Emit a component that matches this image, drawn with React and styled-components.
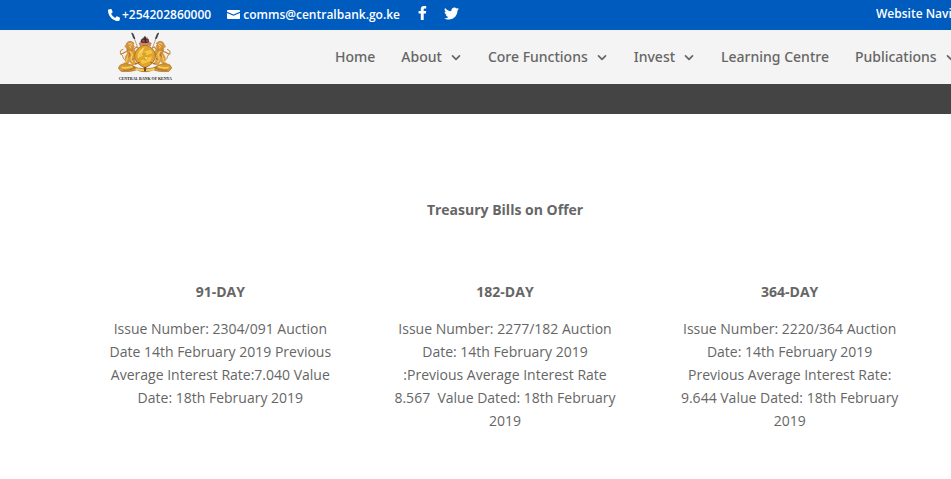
import styled, { createGlobalStyle } from "styled-components";
import { FaPhoneAlt, FaTwitter } from "react-icons/fa";

const GlobalStyle = createGlobalStyle`
  body {
    margin: 0;
    background: #fff;
    color: #666;
    font-family: "Open Sans", "Noto Sans", sans-serif;
    font-size: 14px;
    line-height: 23px;
    overflow-x: hidden;
  }

  a {
    color: inherit;
    text-decoration: none;
  }
`;

const TopBar = styled.div`
  display: flex;
  align-items: center;
  box-sizing: border-box;
  height: 30px;
  padding: 0 0 2px 108px;
  background: #005bbf;
  color: #fff;
  font-size: 12px;
  font-weight: 600;
  white-space: nowrap;
`;

const Contact = styled.a`
  display: flex;
  align-items: center;
  gap: ${(props) => props.$gap}px;
  margin-right: 16px;

  svg {
    margin-top: ${(props) => props.$drop}px;
  }
`;

const Socials = styled.div`
  display: flex;
  align-items: center;
  gap: 17px;
  padding: 0 0 2px 2px;
`;

const Social = styled.a`
  display: flex;
`;

const SiteLink = styled.a`
  width: 75px;
  margin-left: auto;
  padding-bottom: 2px;
  overflow: hidden;
`;

const Header = styled.header`
  display: flex;
  align-items: center;
  height: 54px;
  padding-left: 118px;
  background: #f4f4f4;
  overflow: hidden;
`;

const LogoLink = styled.a`
  display: flex;
  flex-shrink: 0;
`;

const Nav = styled.nav`
  display: flex;
  gap: 26px;
  margin-left: 161px;
  padding-bottom: 2px;
  font-family: "Noto Sans", "Open Sans", sans-serif;
  font-weight: 500;
  white-space: nowrap;
`;

const NavLink = styled.a`
  display: flex;
  align-items: center;
  gap: 8px;

  svg {
    margin-top: 2px;
  }
`;

const Strip = styled.div`
  height: 30px;
  background: #444;
`;

const Main = styled.main`
  padding: 84px 49px 36px 108px;
  text-align: center;
`;

const Title = styled.h1`
  margin: 0 0 59px;
  font-size: 14px;
  font-weight: 700;
`;

const Bills = styled.div`
  display: grid;
  grid-template-columns: repeat(3, 1fr);
  gap: 60px;
`;

const BillName = styled.h2`
  margin: 0 0 14px;
  font-size: 14px;
  font-weight: 700;
`;

const BillText = styled.p`
  margin: 0;
`;

const menu = [
  { label: "Home" },
  { label: "About", sub: true },
  { label: "Core Functions", sub: true },
  { label: "Invest", sub: true },
  { label: "Learning Centre" },
  { label: "Publications", sub: true },
];

const bills = [
  {
    name: "91-DAY",
    text: "Issue Number: 2304/091 Auction Date 14th February 2019 Previous Average Interest Rate:7.040 Value Date: 18th February 2019",
  },
  {
    name: "182-DAY",
    text: "Issue Number: 2277/182 Auction Date: 14th February 2019 :Previous Average Interest Rate 8.567\u00a0 Value Dated: 18th February 2019",
  },
  {
    name: "364-DAY",
    text: "Issue Number: 2220/364 Auction Date: 14th February 2019 Previous Average Interest Rate: 9.644 Value Dated: 18th February 2019",
  },
];

const Chevron = () => (
  <svg width="12" height="12" viewBox="0 0 12 12" fill="none" aria-hidden="true">
    <path d="M2.5 4.8 6 8.3l3.5-3.5" stroke="#666" strokeWidth="1.7" strokeLinecap="round" strokeLinejoin="round" />
  </svg>
);

const Envelope = () => (
  <svg width="13" height="11" viewBox="0 0 13 11" fill="#fff" aria-hidden="true">
    <path d="M.8 1h11.400q.8 0 .8.8v.9L6.500 5.500 0 2.700v-.9q0-.8.8-.8z" />
    <path d="M0 3.900 6.500 6.700 13 3.900V9.200q0 .8-.8.8H.8q-.8 0-.8-.8z" />
  </svg>
);

const Facebook = () => (
  <svg width="9" height="14" viewBox="0 0 9 14" fill="#fff" aria-hidden="true">
    <path d="M8.200 0v2.500H6.700q-1 0-1 1V5h2.500l-.3 2.600H5.700V14H2.800V7.600H.6V5h2.200V3.300Q2.800 0 6 0z" />
  </svg>
);

const Lion = () => (
  <g strokeLinecap="round" strokeLinejoin="round">
    {/* tail */}
    <path d="M78 182c-10-4-8-11-11-16-5-3-8-7-5-14l7-4M68 160l-7 2" fill="none" stroke="#bd8238" strokeWidth="3" />
    {/* body and hind leg */}
    <path d="M80 145c8-4 17-3 24 4l4 12-6 9 3 15 7 7-15 3-8-11-9 12-12 1 9-13-2-12 7-12z" fill="#dda03c" stroke="#a8692a" />
    {/* mane and head */}
    <path d="M79 131c3-7 11-9 17-6l6 4-2 5 3 6-6 8 1 6-10-4-7 3 2-8-8-4z" fill="#d39337" stroke="#98591f" />
    <path d="M85 132l8-2 3 4-7 5 4 5" fill="none" stroke="#f6cf7d" strokeWidth="3" />
    {/* front legs */}
    <path d="M98 151l11-10 4 2M82 154l-9 3-5 4M101 160l9 2" fill="none" stroke="#cf8b33" strokeWidth="4" />
    <path d="M91 154l6 10-4 12 5 10M84 169l-4 12-8 10" fill="none" stroke="#f7c65a" strokeWidth="4" />
    <path d="M87 158l3 7-5 7M102 176l-5 2" fill="none" stroke="#8d5222" strokeWidth="2" />
  </g>
);

const CoatOfArms = () => (
  <svg width="56" height="50" viewBox="54 96 168 150" role="img" aria-label="Central Bank of Kenya">
    {/* spears */}
    <path d="M101 110l20 54M170 110l-20 54" stroke="#9a7560" strokeWidth="2" />
    <path d="M95 99l4 2 6 15-4-1zM176 99l-4 2-6 15 4-1z" fill="#33333d" stroke="#33333d" strokeWidth="2" />
    <Lion />
    <g transform="translate(271 0) scale(-1 1)">
      <Lion />
    </g>
    {/* ribbon */}
    <path d="M61 195c10-6 26-4 37 2 12 7 19 9 37 9s26-2 38-9c11-6 27-8 37-2l5 9-8 10c-19 2-35 0-48-5-10 8-38 8-48 0-13 5-29 7-48 5l-8-10z" fill="#d69a32" stroke="#a0682a" strokeWidth="2" />
    <path d="M65 202c12 4 23 1 34-3M206 202c-12 4-23 1-34-3M106 206c15 6 43 6 58 0" fill="none" stroke="#f7cf56" strokeWidth="5" />
    <path d="M69 211c16 0 25-2 37-8M202 211c-16 0-25-2-37-8M95 196l12 9M176 196l-12 9" fill="none" stroke="#9b5820" strokeWidth="2" />
    {/* shield */}
    <path d="M135 135c18 4 31 17 31 33 0 15-13 28-31 35-18-7-31-20-31-35 0-16 13-29 31-33z" fill="#e3a42b" stroke="#a96d25" strokeWidth="3" />
    <path d="M134 142c-17 7-24 21-19 34 9-9 13-23 19-34z" fill="#f8d56a" />
    <path d="M115 160l36-11 8 10-42 13zM118 183l38-14-4 14-24 9z" fill="#f3c647" />
    <path d="M129 156l10 3-3 8 8 4-6 12-8-5 3-9-7-5z" fill="#d5a126" />
    <path d="M133 170l10 2-4 7z" fill="#efe17a" />
    <path d="M105 192l16-6M166 192l-16-6" stroke="#a36323" strokeWidth="3" />
    {/* crest */}
    <path d="M117 129q18-8 37 0l-3 9q-16-7-31 0z" fill="#c98a58" stroke="#94553a" />
    <path d="M124 118l7-5 4-6 4 6 7 5 2 8-7 3h-13l-7-3z" fill="#47333a" />
    <path d="M126 120h8v7h-6zM138 119h8v6l-7 2z" fill="#bf3540" />
    <path d="M129 112l4 4M142 112l-3 4" stroke="#5e9668" strokeWidth="3" />
    <path d="M134 114l3 10" stroke="#24222a" strokeWidth="3" />
    <path d="M131 202h8l-1 10-3 4-3-4z" fill="#78452f" />
    <text x="136" y="241" textAnchor="middle" fontFamily="Liberation Serif, serif" fontWeight="700" fontSize="12" fill="#222">
      CENTRAL BANK OF KENYA
    </text>
  </svg>
);

const App = () => {
  return (
    <>
      <GlobalStyle />
      <TopBar>
        <Contact href="tel:+254202860000" $gap={2} $drop={2}>
          <FaPhoneAlt size={12} />
          +254202860000
        </Contact>
        <Contact href="mailto:comms@centralbank.go.ke" $gap={3} $drop={0}>
          <Envelope />
          comms@centralbank.go.ke
        </Contact>
        <Socials>
          <Social href="#facebook" aria-label="Facebook">
            <Facebook />
          </Social>
          <Social href="#twitter" aria-label="Twitter">
            <FaTwitter size={15} />
          </Social>
        </Socials>
        <SiteLink href="#navigation">Website Navigation</SiteLink>
      </TopBar>
      <Header>
        <LogoLink href="#home">
          <CoatOfArms />
        </LogoLink>
        <Nav>
          {menu.map((item) => (
            <NavLink key={item.label} href="#menu">
              {item.label}
              {item.sub && <Chevron />}
            </NavLink>
          ))}
        </Nav>
      </Header>
      <Strip />
      <Main>
        <Title>Treasury Bills on Offer</Title>
        <Bills>
          {bills.map((bill) => (
            <section key={bill.name}>
              <BillName>{bill.name}</BillName>
              <BillText>{bill.text}</BillText>
            </section>
          ))}
        </Bills>
      </Main>
    </>
  );
};

export default App;
